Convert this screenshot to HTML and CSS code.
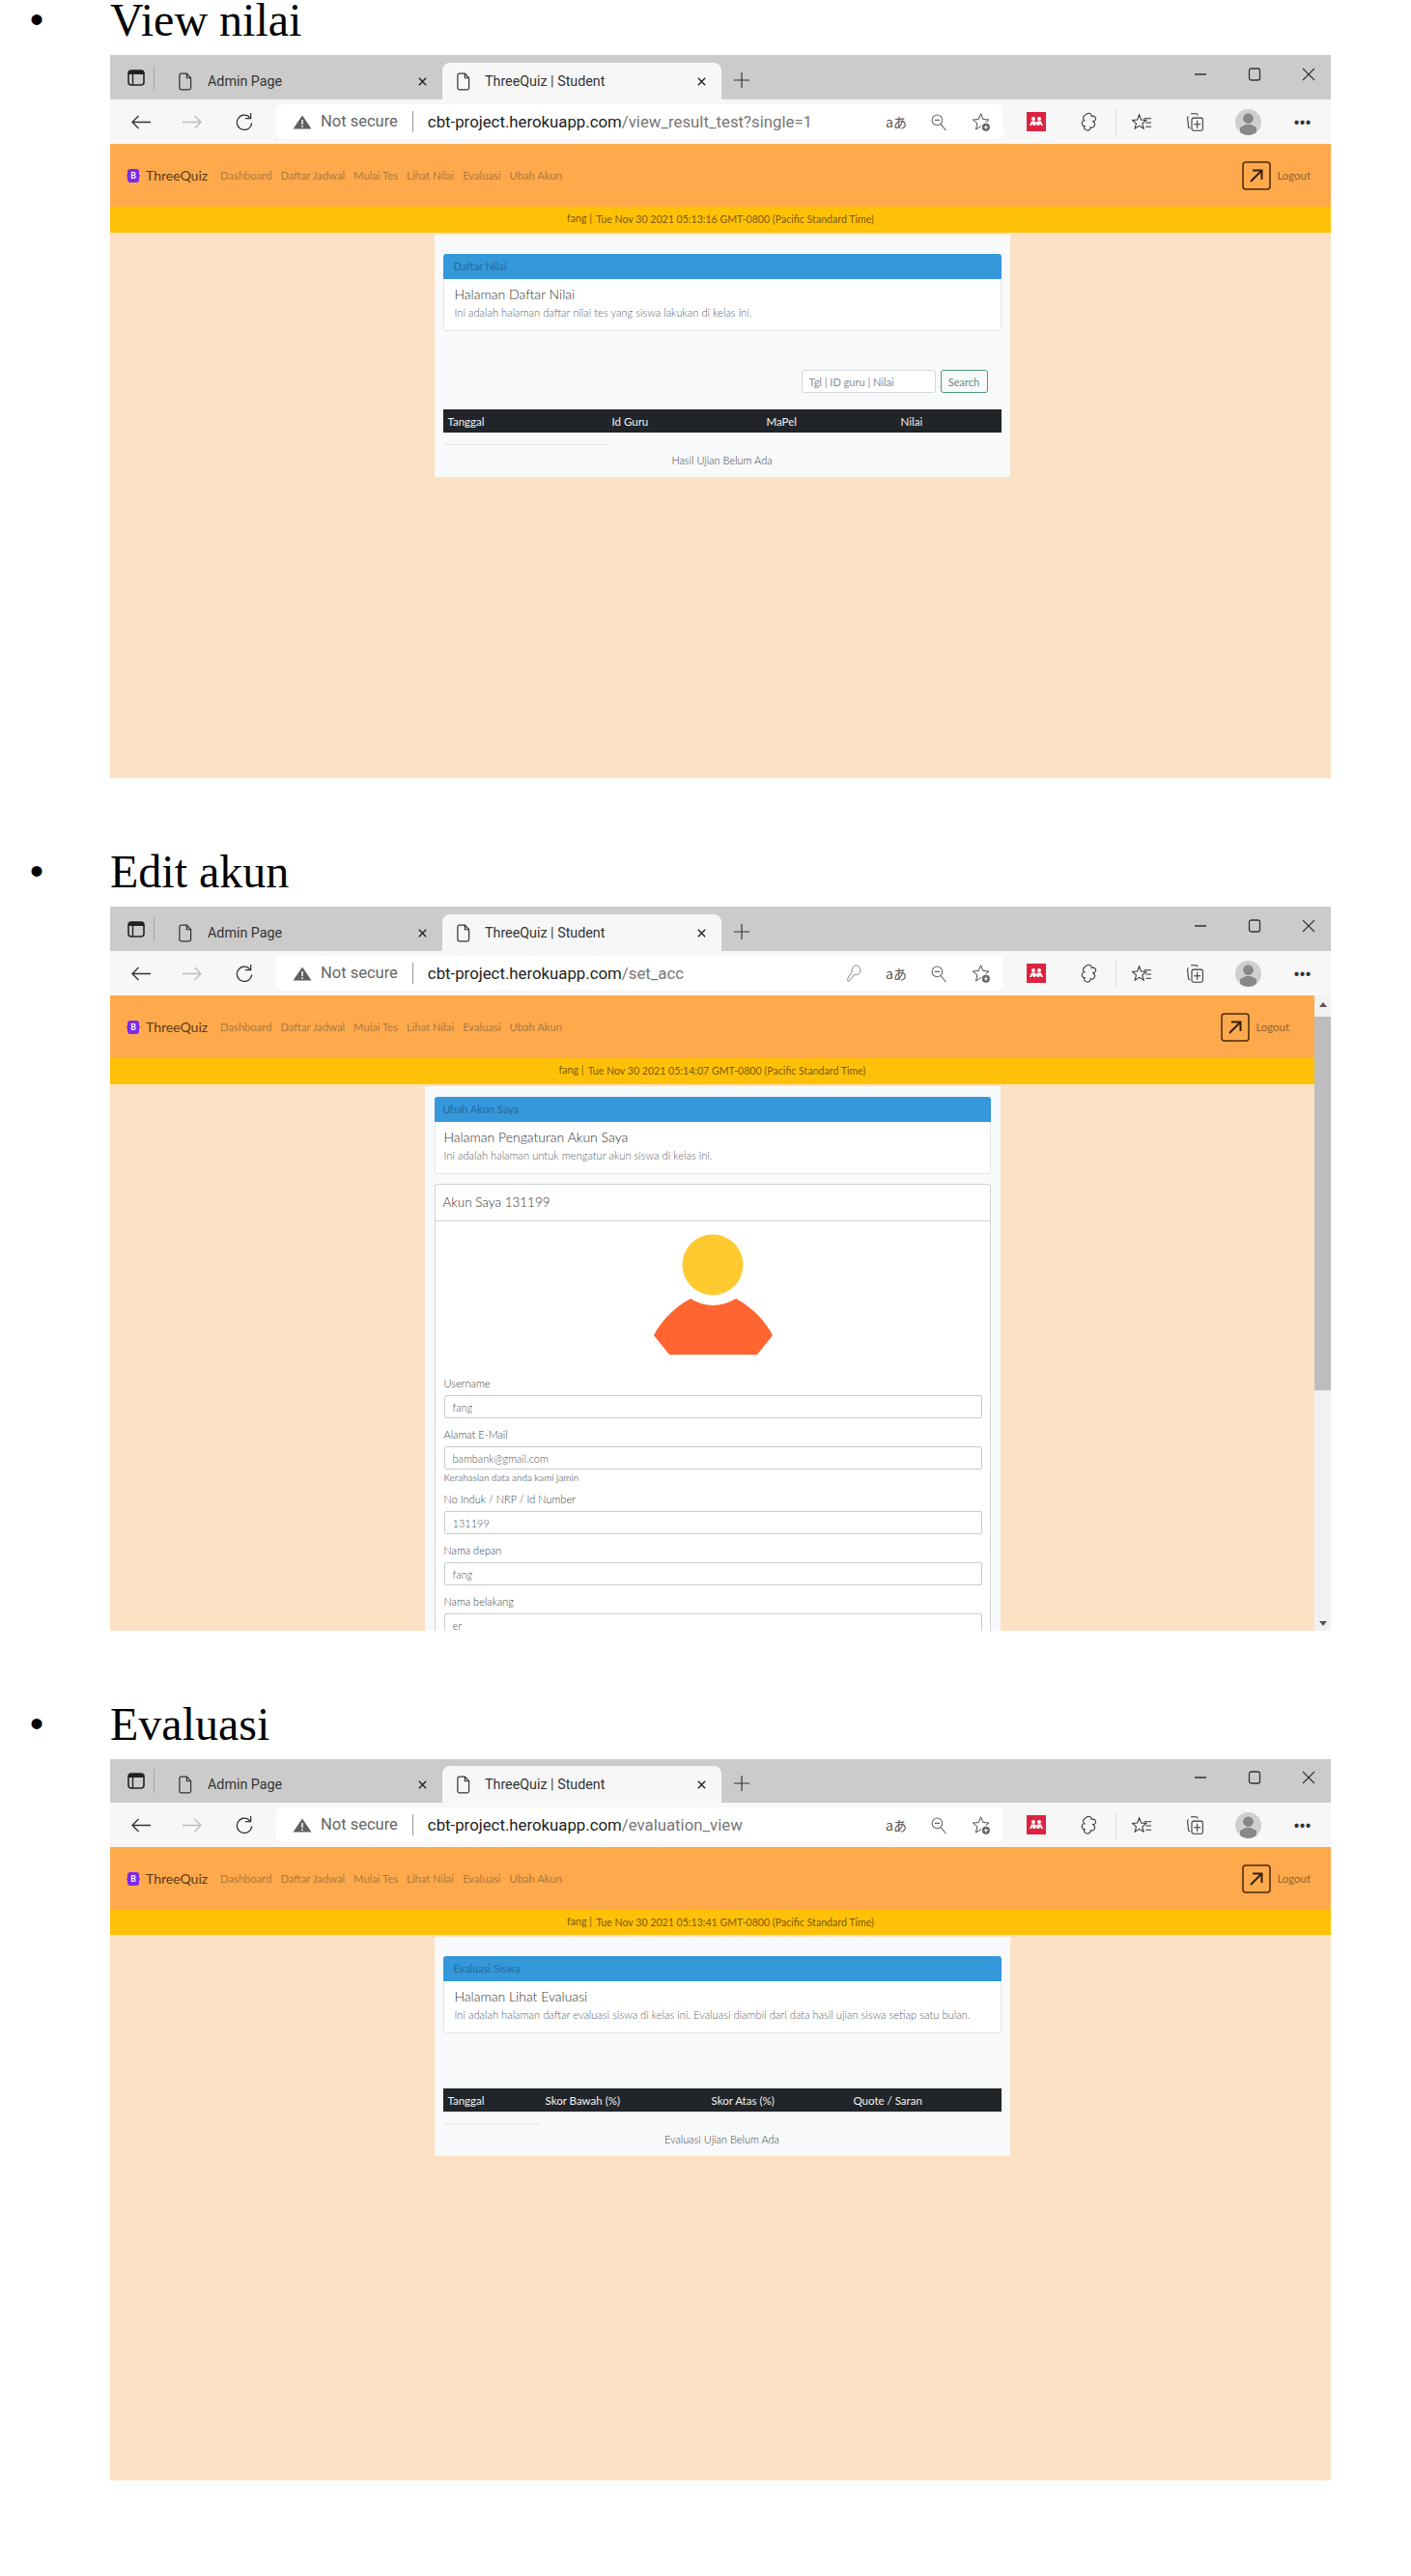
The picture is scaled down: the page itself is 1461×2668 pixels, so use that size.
FILE: index.html
```html
<!DOCTYPE html>
<html lang="id">
<head>
    <meta charset="UTF-8">
    <title>ThreeQuiz | Student</title>
    <link rel="stylesheet" href="styles.css">
</head>
<body>

    <!-- icons used by all three browser windows -->
    <svg class="sprite" xmlns="http://www.w3.org/2000/svg">
        <symbol id="i-sidebar" viewBox="0 0 18 17"><rect x="1" y="1" width="16" height="15" rx="3" fill="none" stroke="#222" stroke-width="1.600"/><path d="M1 4a3 3 0 0 1 3-3h10a3 3 0 0 1 3 3v1H1z" fill="#222"/><path d="M5.500 5v11" stroke="#222" stroke-width="1.400"/></symbol>
        <symbol id="i-doc" viewBox="0 0 16 20"><path d="M2 3a2 2 0 0 1 2-2h6l4.500 5v11a2 2 0 0 1-2 2H4a2 2 0 0 1-2-2zM10 1v5h4.500" fill="none" stroke="#333" stroke-width="1.300"/></symbol>
        <symbol id="i-x" viewBox="0 0 12 12"><path d="M2 2l8 8M10 2l-8 8" stroke="#222" stroke-width="1.500" fill="none"/></symbol>
        <symbol id="i-plus" viewBox="0 0 20 20"><path d="M10 1v18M1 10h18" stroke="#333" stroke-width="1.300" fill="none"/></symbol>
        <symbol id="i-min" viewBox="0 0 14 14"><path d="M1 7h12" stroke="#333" stroke-width="1.500"/></symbol>
        <symbol id="i-max" viewBox="0 0 14 14"><rect x="1.500" y="1" width="11" height="12" rx="2" fill="none" stroke="#333" stroke-width="1.300"/></symbol>
        <symbol id="i-close" viewBox="0 0 14 14"><path d="M1 1l12 12M13 1L1 13" stroke="#333" stroke-width="1.100" fill="none"/></symbol>
        <symbol id="i-arrow" viewBox="0 0 22 15"><path d="M21 7.500H2M8.500 1L2 7.500 8.500 14" fill="none" stroke="currentColor" stroke-width="1.300"/></symbol>
        <symbol id="i-reload" viewBox="0 0 20 22"><path d="M16 6a8 8 0 1 0 2 6M17 1v6h-6" fill="none" stroke="#333" stroke-width="1.300"/></symbol>
        <symbol id="i-warn" viewBox="0 0 20 15"><path d="M10 .5l9.500 14H.5z" fill="#5f5f5f"/><path d="M10 5v5M10 11.200v1.800" stroke="#fff" stroke-width="1.500"/></symbol>
        <symbol id="i-key" viewBox="0 0 20 24"><path d="M12 2a6 6 0 0 1 5 8 6 6 0 0 1-7 3l-6 8-2-1 1-4 4.500-6A6 6 0 0 1 12 2z" fill="none" stroke="#777" stroke-width="1"/></symbol>
        <symbol id="i-zoom" viewBox="0 0 15 16"><circle cx="6" cy="6" r="5" fill="none" stroke="#666" stroke-width="1"/><path d="M3.500 6h5M9.500 10l5 6" stroke="#666" stroke-width="1"/></symbol>
        <symbol id="i-favadd" viewBox="0 0 22 24"><path d="M10 2l2.600 6.600 6.900.6-5.300 4.400 1.700 6.900-5.900-3.700-5.900 3.700 1.700-6.900L.5 9.200l6.900-.6z" fill="none" stroke="#444" stroke-width="1.100"/><circle cx="16" cy="18" r="5.200" fill="#5f5f5f" stroke="#fff" stroke-width="1.200"/><path d="M13.500 18h5M16 15.500v5" stroke="#fff" stroke-width="1.200"/></symbol>
        <symbol id="i-puzzle" viewBox="0 0 20 24"><path d="M8 2c3-1.500 5 0 5 3 3-1 6 1 5 4-.5 1-2 2-3 2 1 1 2.500 2 2 4-.5 3-3 4-5 3 0 3-3 5-6 3-2-1-2-3-1-4-2 0-4-2-3-5 .5-1 1.500-2 2.500-2C3 9 2.500 6 5 4c1-1 2-1.500 3-2z" fill="none" stroke="#333" stroke-width="1.200"/></symbol>
        <symbol id="i-favs" viewBox="0 0 22 20"><path d="M8 2l2 5.400 5.500.5-4.200 3.500 1.400 5.600L8 14l-4.700 3 1.400-5.600L.5 7.900 6 7.400z" fill="none" stroke="#333" stroke-width="1.100"/><path d="M13 6h8M15 10.500h6M15 15h6" stroke="#333" stroke-width="1.100"/></symbol>
        <symbol id="i-coll" viewBox="0 0 22 24"><path d="M6 2h6a2 2 0 0 1 2 2M3 5a2 2 0 0 0-1 2l1 10a2 2 0 0 0 2 2" fill="none" stroke="#333" stroke-width="1.200"/><rect x="7" y="7" width="13" height="15" rx="2" fill="none" stroke="#333" stroke-width="1.200"/><path d="M13.500 10v9M9.500 14.500h8" stroke="#333" stroke-width="1.200"/></symbol>
        <symbol id="i-people" viewBox="0 0 20 20"><rect width="20" height="20" fill="#dc2340"/><circle cx="7" cy="7" r="2" fill="#fff"/><circle cx="13" cy="7" r="2" fill="#fff"/><path d="M3 14l2-4.500h4l1 2 1-2h4l2 4.500h-2l-1-2-1 2h-2l-1-2-1 2H7l-1-2-1 2z" fill="#fff"/></symbol>
        <symbol id="i-boot" viewBox="0 0 16 16"><rect x="2" y="1" width="12" height="14" rx="3" fill="#7c2ae8"/><path d="M1 8h1M14 8h1" stroke="#7c2ae8" stroke-width="1.500"/><text x="8" y="11" font-family="Lato, sans-serif" font-size="8.500" font-weight="700" text-anchor="middle" fill="#fff">B</text></symbol>
        <symbol id="i-logout" viewBox="0 0 30 30"><rect x="1" y="1" width="28" height="28" rx="3" fill="none" stroke="#4a2a0a" stroke-width="1.500"/><path d="M9 21L20 10M11 9.500h9.500V19" fill="none" stroke="#33200a" stroke-width="2"/></symbol>
    </svg>

    <section class="shot">
        <h2 class="shot-title"><span class="bullet">&bull;</span>View nilai</h2>
        <div class="win win-nilai">
            <div class="tabbar">
                <span class="tb-side"><svg class="ic-18"><use href="#i-sidebar"/></svg></span>
                <span class="tab tab-off"><svg class="ic-doc"><use href="#i-doc"/></svg><span class="tab-name">Admin Page</span><svg class="ic-x"><use href="#i-x"/></svg></span>
                <span class="tab tab-on"><svg class="ic-doc"><use href="#i-doc"/></svg><span class="tab-name">ThreeQuiz | Student</span><svg class="ic-x"><use href="#i-x"/></svg></span>
                <svg class="ic-plus"><use href="#i-plus"/></svg>
                <span class="winctl"><svg class="ic-min"><use href="#i-min"/></svg><svg class="ic-max"><use href="#i-max"/></svg><svg class="ic-max"><use href="#i-close"/></svg></span>
            </div>
            <div class="toolbar">
                <span class="tool"><svg class="ic-nav"><use href="#i-arrow"/></svg></span>
                <span class="tool tool-dim"><svg class="ic-nav flip"><use href="#i-arrow"/></svg></span>
                <span class="tool"><svg class="ic-reload"><use href="#i-reload"/></svg></span>
                <div class="address">
                    <svg class="ic-warn"><use href="#i-warn"/></svg>
                    <span class="notsecure">Not secure</span>
                    <span class="url"><b>cbt-project.herokuapp.com</b>/view_result_test?single=1</span>
                    <span class="addr-tools">
                        <span class="addr-tool aa">a&#12354;</span>
                        <span class="addr-tool"><svg class="ic-zoom"><use href="#i-zoom"/></svg></span>
                        <span class="addr-tool"><svg class="ic-fav"><use href="#i-favadd"/></svg></span>
                    </span>
                </div>
                <div class="ext-tools">
                    <span class="ext"><svg class="ic-people"><use href="#i-people"/></svg></span>
                    <span class="ext"><svg class="ic-fav"><use href="#i-puzzle"/></svg></span>
                    <span class="ext-sep"></span>
                    <span class="ext"><svg class="ic-fav"><use href="#i-favs"/></svg></span>
                    <span class="ext"><svg class="ic-fav"><use href="#i-coll"/></svg></span>
                    <span class="ext"><span class="profile"></span></span>
                    <span class="ext dots">&middot;&middot;&middot;</span>
                </div>
            </div>
            <div class="viewport">
                <div class="page">
                    <nav class="navbar">
                        <svg class="ic-boot"><use href="#i-boot"/></svg>
                        <span class="brand">ThreeQuiz</span>
                        <span class="navlinks"><a>Dashboard</a><a>Daftar Jadwal</a><a>Mulai Tes</a><a>Lihat Nilai</a><a>Evaluasi</a><a>Ubah Akun</a></span>
                        <span class="logout"><svg class="ic-logout"><use href="#i-logout"/></svg>Logout</span>
                    </nav>
                    <div class="statusbar"><span class="who">fang |</span> Tue Nov 30 2021 05:13:16 GMT-0800 (Pacific Standard Time)</div>
                    <div class="content">
                        <div class="sheet">
                            <div class="intro">
                                <div class="intro-head">Daftar Nilai</div>
                                <div class="intro-body">
                                    <h5>Halaman Daftar Nilai</h5>
                                    <p>Ini adalah halaman daftar nilai tes yang siswa lakukan di kelas ini.</p>
                                </div>
                            </div>
                            <div class="search">
                                <input class="search-input" type="text" placeholder="Tgl | ID guru | Nilai">
                                <button class="search-btn">Search</button>
                            </div>
                            <table class="grid grid-nilai">
                                <thead><tr><th>Tanggal</th><th>Id Guru</th><th>MaPel</th><th>Nilai</th></tr></thead>
                                <tbody><tr><td></td><td class="noline" colspan="3"></td></tr></tbody>
                            </table>
                            <div class="empty">Hasil Ujian Belum Ada</div>
                        </div>
                    </div>
                </div>
            </div>
        </div>
    </section>

    <section class="shot">
        <h2 class="shot-title"><span class="bullet">&bull;</span>Edit akun</h2>
        <div class="win win-akun">
            <div class="tabbar">
                <span class="tb-side"><svg class="ic-18"><use href="#i-sidebar"/></svg></span>
                <span class="tab tab-off"><svg class="ic-doc"><use href="#i-doc"/></svg><span class="tab-name">Admin Page</span><svg class="ic-x"><use href="#i-x"/></svg></span>
                <span class="tab tab-on"><svg class="ic-doc"><use href="#i-doc"/></svg><span class="tab-name">ThreeQuiz | Student</span><svg class="ic-x"><use href="#i-x"/></svg></span>
                <svg class="ic-plus"><use href="#i-plus"/></svg>
                <span class="winctl"><svg class="ic-min"><use href="#i-min"/></svg><svg class="ic-max"><use href="#i-max"/></svg><svg class="ic-max"><use href="#i-close"/></svg></span>
            </div>
            <div class="toolbar">
                <span class="tool"><svg class="ic-nav"><use href="#i-arrow"/></svg></span>
                <span class="tool tool-dim"><svg class="ic-nav flip"><use href="#i-arrow"/></svg></span>
                <span class="tool"><svg class="ic-reload"><use href="#i-reload"/></svg></span>
                <div class="address">
                    <svg class="ic-warn"><use href="#i-warn"/></svg>
                    <span class="notsecure">Not secure</span>
                    <span class="url"><b>cbt-project.herokuapp.com</b>/set_acc</span>
                    <span class="addr-tools">
                        <span class="addr-tool"><svg class="ic-fav"><use href="#i-key"/></svg></span>
                        <span class="addr-tool aa">a&#12354;</span>
                        <span class="addr-tool"><svg class="ic-zoom"><use href="#i-zoom"/></svg></span>
                        <span class="addr-tool"><svg class="ic-fav"><use href="#i-favadd"/></svg></span>
                    </span>
                </div>
                <div class="ext-tools">
                    <span class="ext"><svg class="ic-people"><use href="#i-people"/></svg></span>
                    <span class="ext"><svg class="ic-fav"><use href="#i-puzzle"/></svg></span>
                    <span class="ext-sep"></span>
                    <span class="ext"><svg class="ic-fav"><use href="#i-favs"/></svg></span>
                    <span class="ext"><svg class="ic-fav"><use href="#i-coll"/></svg></span>
                    <span class="ext"><span class="profile"></span></span>
                    <span class="ext dots">&middot;&middot;&middot;</span>
                </div>
            </div>
            <div class="viewport">
                <div class="page">
                    <nav class="navbar">
                        <svg class="ic-boot"><use href="#i-boot"/></svg>
                        <span class="brand">ThreeQuiz</span>
                        <span class="navlinks"><a>Dashboard</a><a>Daftar Jadwal</a><a>Mulai Tes</a><a>Lihat Nilai</a><a>Evaluasi</a><a>Ubah Akun</a></span>
                        <span class="logout"><svg class="ic-logout"><use href="#i-logout"/></svg>Logout</span>
                    </nav>
                    <div class="statusbar"><span class="who">fang |</span> Tue Nov 30 2021 05:14:07 GMT-0800 (Pacific Standard Time)</div>
                    <div class="content">
                        <div class="sheet">
                            <div class="intro">
                                <div class="intro-head">Ubah Akun Saya</div>
                                <div class="intro-body">
                                    <h5>Halaman Pengaturan Akun Saya</h5>
                                    <p>Ini adalah halaman untuk mengatur akun siswa di kelas ini.</p>
                                </div>
                            </div>
                            <div class="account">
                                <div class="account-head">Akun Saya 131199</div>
                                <div class="account-body">
                                    <svg class="avatar" viewBox="0 0 124 126">
                                        <circle cx="62" cy="32" r="31.500" fill="#ffc930"/>
                                        <path d="M39 67Q62 81 86 67C105 77 118 93 124 105L108 125H17L1 105C7 93 20 77 39 67Z" fill="#ff6530"/>
                                    </svg>
                                    <label class="field">Username<input type="text" value="fang"></label>
                                    <label class="field has-help">Alamat E-Mail<input type="text" value="bambank@gmail.com"></label>
                                    <small class="help">Kerahasian data anda kami jamin</small>
                                    <label class="field">No Induk / NRP / Id Number<input type="text" value="131199"></label>
                                    <label class="field">Nama depan<input type="text" value="fang"></label>
                                    <label class="field">Nama belakang<input type="text" value="er"></label>
                                </div>
                            </div>
                        </div>
                    </div>
                </div>
                <div class="scrollbar">
                    <span class="sb-up"></span>
                    <span class="sb-thumb"></span>
                    <span class="sb-down"></span>
                </div>
            </div>
        </div>
    </section>

    <section class="shot">
        <h2 class="shot-title"><span class="bullet">&bull;</span>Evaluasi</h2>
        <div class="win win-eval">
            <div class="tabbar">
                <span class="tb-side"><svg class="ic-18"><use href="#i-sidebar"/></svg></span>
                <span class="tab tab-off"><svg class="ic-doc"><use href="#i-doc"/></svg><span class="tab-name">Admin Page</span><svg class="ic-x"><use href="#i-x"/></svg></span>
                <span class="tab tab-on"><svg class="ic-doc"><use href="#i-doc"/></svg><span class="tab-name">ThreeQuiz | Student</span><svg class="ic-x"><use href="#i-x"/></svg></span>
                <svg class="ic-plus"><use href="#i-plus"/></svg>
                <span class="winctl"><svg class="ic-min"><use href="#i-min"/></svg><svg class="ic-max"><use href="#i-max"/></svg><svg class="ic-max"><use href="#i-close"/></svg></span>
            </div>
            <div class="toolbar">
                <span class="tool"><svg class="ic-nav"><use href="#i-arrow"/></svg></span>
                <span class="tool tool-dim"><svg class="ic-nav flip"><use href="#i-arrow"/></svg></span>
                <span class="tool"><svg class="ic-reload"><use href="#i-reload"/></svg></span>
                <div class="address">
                    <svg class="ic-warn"><use href="#i-warn"/></svg>
                    <span class="notsecure">Not secure</span>
                    <span class="url"><b>cbt-project.herokuapp.com</b>/evaluation_view</span>
                    <span class="addr-tools">
                        <span class="addr-tool aa">a&#12354;</span>
                        <span class="addr-tool"><svg class="ic-zoom"><use href="#i-zoom"/></svg></span>
                        <span class="addr-tool"><svg class="ic-fav"><use href="#i-favadd"/></svg></span>
                    </span>
                </div>
                <div class="ext-tools">
                    <span class="ext"><svg class="ic-people"><use href="#i-people"/></svg></span>
                    <span class="ext"><svg class="ic-fav"><use href="#i-puzzle"/></svg></span>
                    <span class="ext-sep"></span>
                    <span class="ext"><svg class="ic-fav"><use href="#i-favs"/></svg></span>
                    <span class="ext"><svg class="ic-fav"><use href="#i-coll"/></svg></span>
                    <span class="ext"><span class="profile"></span></span>
                    <span class="ext dots">&middot;&middot;&middot;</span>
                </div>
            </div>
            <div class="viewport">
                <div class="page">
                    <nav class="navbar">
                        <svg class="ic-boot"><use href="#i-boot"/></svg>
                        <span class="brand">ThreeQuiz</span>
                        <span class="navlinks"><a>Dashboard</a><a>Daftar Jadwal</a><a>Mulai Tes</a><a>Lihat Nilai</a><a>Evaluasi</a><a>Ubah Akun</a></span>
                        <span class="logout"><svg class="ic-logout"><use href="#i-logout"/></svg>Logout</span>
                    </nav>
                    <div class="statusbar"><span class="who">fang |</span> Tue Nov 30 2021 05:13:41 GMT-0800 (Pacific Standard Time)</div>
                    <div class="content">
                        <div class="sheet">
                            <div class="intro">
                                <div class="intro-head">Evaluasi Siswa</div>
                                <div class="intro-body">
                                    <h5>Halaman Lihat Evaluasi</h5>
                                    <p>Ini adalah halaman daftar evaluasi siswa di kelas ini. Evaluasi diambil dari data hasil ujian siswa setiap satu bulan.</p>
                                </div>
                            </div>
                            <table class="grid grid-eval">
                                <thead><tr><th>Tanggal</th><th>Skor Bawah (%)</th><th>Skor Atas (%)</th><th>Quote / Saran</th></tr></thead>
                                <tbody><tr><td></td><td class="noline" colspan="3"></td></tr></tbody>
                            </table>
                            <div class="empty">Evaluasi Ujian Belum Ada</div>
                        </div>
                    </div>
                </div>
            </div>
        </div>
    </section>

</body>
</html>
```
FILE: styles.css
```css
* { box-sizing: border-box; }
body { margin: 0; background: #fff; font-family: 'Lato', sans-serif; color: #333; }
.sprite { display: none; }

/* document around the screenshots */
.shot + .shot { margin-top: 76px; }
.shot-title { display: flex; margin: 0 0 16px 0; height: 41px; font-family: 'Liberation Serif', serif; font-weight: normal; font-size: 48px; line-height: 41px; color: #000; }
.bullet { width: 114px; padding-left: 31px; font-size: 40px; font-family: 'Liberation Sans', sans-serif; }

/* browser window */
.win { display: flex; flex-direction: column; width: 1264px; margin-left: 114px; }
.win-nilai { height: 749px; }
.win-akun { height: 750px; }
.win-eval { height: 747px; }

.tabbar { display: flex; align-items: flex-end; height: 46px; flex: none; background: #cbcbcb; }
.tb-side { display: flex; align-items: center; width: 57px; height: 46px; padding-left: 18px; }
.tb-side::after { content: ""; width: 1px; height: 25px; background: #a8a8a8; margin-left: 9px; }
.ic-18 { width: 18px; height: 17px; flex: none; }
.tab { display: flex; align-items: center; height: 38px; }
.tab-off { width: 287px; padding-left: 13px; }
.tab-on { width: 289px; padding-left: 14px; background: #f7f7f7; border-radius: 8px 8px 0 0; }
.ic-doc { width: 15px; height: 19px; flex: none; }
.tab-name { flex: 1; margin-left: 15px; font-family: 'Roboto', sans-serif; font-size: 14.300px; color: #333; }
.tab-off .tab-name { margin-left: 16px; }
.ic-x { width: 11px; height: 11px; margin-right: 15px; flex: none; }
.ic-plus { width: 18px; height: 18px; margin: 0 0 11px 12px; }
.winctl { display: flex; align-items: center; gap: 42px; height: 46px; margin-left: auto; padding: 0 16px 6px 0; }
.ic-min { width: 14px; height: 14px; }
.ic-max { width: 14px; height: 14px; }

.toolbar { display: flex; align-items: center; height: 46px; flex: none; padding-left: 5px; background: #f7f7f7; }
.tool { display: flex; align-items: center; justify-content: center; width: 53px; color: #333; }
.tool-dim { color: #bbb; }
.ic-nav { width: 22px; height: 15px; }
.flip { transform: scaleX(-1); }
.ic-reload { width: 20px; height: 21px; margin-left: 2px; }
.address { display: flex; align-items: center; width: 753px; height: 36px; margin-left: 8px; padding-left: 17px; background: #fff; border-radius: 6px; font-family: 'Roboto', sans-serif; font-size: 16.500px; }
.ic-warn { width: 20px; height: 15px; flex: none; }
.notsecure { margin-left: 9px; padding-right: 15px; border-right: 1px solid #999; color: #666; line-height: 22px; }
.url { margin-left: 15px; font-size: 16.800px; color: #777; }
.url b { font-weight: normal; color: #222; }
.addr-tools { display: flex; align-items: center; margin-left: auto; padding-right: 1px; }
.addr-tool { display: flex; align-items: center; justify-content: center; width: 44px; color: #555; }
.aa { font-size: 14px; font-family: 'Noto Sans CJK JP', sans-serif; }
.ic-zoom { width: 16px; height: 17px; }
.ic-fav { width: 21px; height: 21px; }
.ic-people { width: 20px; height: 20px; }
.ext-tools { display: flex; align-items: center; margin-left: 6px; }
.ext { display: flex; align-items: center; justify-content: center; width: 55px; }
.ext-sep { width: 1px; height: 27px; margin: 0 -1px 0 0; background: #ddd; }
.profile { display: block; width: 27px; height: 27px; border-radius: 50%; background: radial-gradient(circle at 50% 36%, #888 0 5px, transparent 5.500px), radial-gradient(ellipse 9px 6px at 50% 82%, #888 0 100%, transparent 100%), #cfcfcf; }
.dots { font-size: 22px; font-weight: 700; line-height: 20px; color: #333; padding-left: 2px; }

/* captured page */
.viewport { display: flex; flex: 1; min-height: 0; overflow: hidden; }
.page { display: flex; flex-direction: column; flex: 1; min-width: 0; background: #fde1c5; }
.navbar { display: flex; align-items: center; height: 65px; flex: none; padding: 0 21px 0 16px; background: #ffa94d; }
.ic-boot { width: 16px; height: 16px; flex: none; }
.brand { margin-left: 5px; font-size: 14px; color: #5a3a14; }
.navlinks { display: flex; gap: 9px; margin-left: 13px; font-size: 11.200px; color: #ab7a3e; }
.logout { display: flex; align-items: center; gap: 6px; margin-left: auto; font-size: 11.400px; color: #8f6430; }
.win-akun .navbar { padding-right: 26px; }
.ic-logout { width: 30px; height: 30px; }
.statusbar { height: 27px; flex: none; background: #ffc107; text-align: center; font-size: 10.600px; line-height: 27px; color: #7a5a10; }
.who { position: relative; top: -1px; margin-right: 2px; }

.content { flex: 1; min-height: 0; padding: 2px 0 0 3px; }
.win-akun .content { padding-left: 0; }
.sheet { width: 596px; margin: 0 auto; padding: 20px 9px 0; background: #f8f9fa; }
.intro { background: #fff; border: 1px solid #e4e6e8; border-radius: 3px; }
.intro-head { height: 26px; margin: -1px; padding: 0 11px; background: #3498db; border-radius: 3px 3px 0 0; font-size: 11px; line-height: 26px; color: #27699b; }
.intro-body { height: 54px; padding: 8px 11px 0; }
.win-akun .intro-head, .win-akun .intro-body { padding-left: 9px; }
.intro-body h5 { margin: 0; font-size: 14px; font-weight: 300; line-height: 17px; color: #333; }
.intro-body p { margin: 4px 0 0; font-size: 11.200px; font-weight: 300; line-height: 13px; color: #5c656d; }

.search { display: flex; justify-content: flex-end; gap: 5px; margin-top: 40px; padding-right: 14px; }
.search-input { width: 139px; height: 24px; padding: 0 7px; background: #fff; border: 1px solid #d5d9dd; border-radius: 3px; font: 11px 'Lato', sans-serif; }
.search-input::placeholder { color: #868e96; }
.search-btn { width: 49px; height: 24px; padding: 0; background: #f8f9fa; border: 1px solid #4f9a78; border-radius: 3px; font: 11px 'Lato', sans-serif; color: #6c8d80; }

.grid { width: 100%; margin-top: 17px; border-collapse: collapse; table-layout: fixed; }
.grid th { height: 24px; padding: 0 0 0 5px; background: #212529; color: #f1f3f5; font-size: 11.500px; font-weight: 400; text-align: left; }
.grid td { height: 12px; padding: 0; border-bottom: 1px solid #e4e6e8; }
.grid td.noline { border-bottom: 0; }
.grid-nilai th:nth-child(1) { width: 170px; }
.grid-nilai th:nth-child(2) { width: 160px; }
.grid-nilai th:nth-child(3) { width: 139px; }
.grid-eval { margin-top: 57px; }
.grid-eval th:nth-child(1) { width: 101px; }
.grid-eval th:nth-child(2) { width: 172px; }
.grid-eval th:nth-child(3) { width: 147px; }
.empty { height: 33px; padding-top: 9px; font-size: 11px; font-weight: 300; line-height: 14px; text-align: center; color: #444; }

/* Edit akun window */
.win-akun .sheet { padding: 11px 10px 0; }
.account { margin-top: 10px; background: #fff; border: 1px solid #ccd1d6; border-radius: 3px; }
.account-head { height: 38px; padding: 0 8px; border-bottom: 1px solid #ccd1d6; font-size: 13.500px; font-weight: 300; line-height: 37px; color: #333; }
.account-body { padding: 13px 8px 0 9px; }
.avatar { display: block; width: 124px; height: 126px; margin: 0 auto 22px; }
.field { display: block; margin-bottom: 10px; font-size: 11px; font-weight: 300; line-height: 14px; color: #444; }
.field.has-help { margin-bottom: 3px; }
.field input { display: block; width: 100%; height: 24px; margin-top: 5px; padding: 0 8px; background: #fff; border: 1px solid #c6ccd2; border-radius: 2px; font: 300 11px 'Lato', sans-serif; color: #555; }
.help { display: block; margin-bottom: 10px; font-size: 9.800px; line-height: 11px; color: #8b9298; }

.scrollbar { display: flex; flex-direction: column; align-items: center; width: 17px; flex: none; background: #f1f1f1; }
.sb-up, .sb-down { width: 0; height: 0; margin: 7px 0 5px; border-left: 4px solid transparent; border-right: 4px solid transparent; }
.sb-up { border-bottom: 5px solid #555; }
.sb-down { margin-top: auto; border-top: 5px solid #555; }
.sb-thumb { width: 17px; height: 387px; margin-top: 5px; background: #bdbdbd; }

/* last capture is a few px shorter */
.win-eval .tabbar { height: 45px; }
.win-eval .statusbar { height: 26px; line-height: 26px; }
```
